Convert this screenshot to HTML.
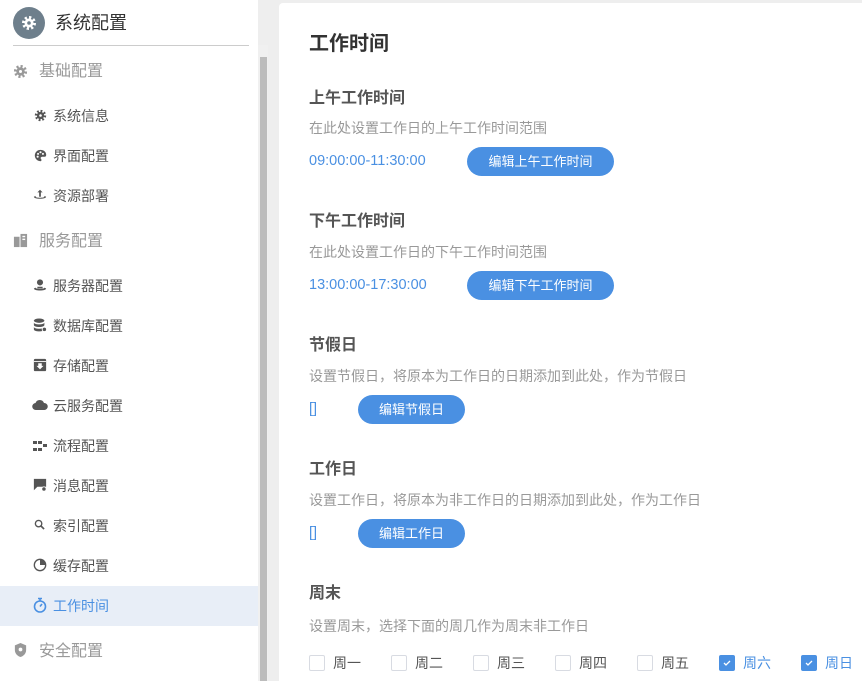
<!DOCTYPE html>
<html><head><meta charset="utf-8"><style>
*{margin:0;padding:0;box-sizing:border-box}
html,body{width:862px;height:681px;overflow:hidden}
body{background:#eeeeee;font-family:"Liberation Sans","Noto Sans CJK SC",sans-serif;position:relative}
.a{position:absolute;white-space:nowrap}
#side{position:absolute;left:0;top:0;width:258px;height:681px;background:#fff}
.grp{font-size:16px;color:#999;line-height:20px}
.sub{font-size:14px;color:#555;line-height:18px}
.ic{position:absolute}
.h{font-size:16px;font-weight:bold;color:#555;line-height:22px}
.d{font-size:14px;color:#999;line-height:18px}
.v{font-size:14.5px;color:#4a90e2;line-height:20px}
.btn{position:absolute;height:29px;border-radius:15px;background:#4a90e2;color:#fff;font-size:13px;line-height:29px;text-align:center}
.cb{position:absolute;top:655px;width:16px;height:16px;border:1px solid #d8dbe2;border-radius:2px;background:#fff}
.cb.on{background:#4a90e2;border-color:#4a90e2}
.cl{position:absolute;top:654px;font-size:14px;color:#555;line-height:18px}
</style></head><body>
<div id="side">
 <div class="a" style="left:13px;top:7px;width:32px;height:32px;border-radius:50%;background:#6e7f8c"></div>
 <svg class="ic" style="left:21px;top:15px" width="16" height="16" viewBox="0 0 16 16"><circle cx="8" cy="8" r="5.5" fill="none" stroke="#fff" stroke-width="3" stroke-dasharray="2.2 2.1"/><circle cx="8" cy="8" r="4.5" fill="#fff"/><circle cx="8" cy="8" r="1.8" fill="#6e7f8c"/></svg>
 <div class="a" style="left:55px;top:11px;font-size:18px;color:#333;line-height:24px">系统配置</div>
 <div class="a" style="left:13px;top:45px;width:236px;height:1px;background:#ccc"></div>

 <svg class="ic" style="left:13px;top:64px" width="15" height="15" viewBox="0 0 16 16"><circle cx="8" cy="8" r="5.5" fill="none" stroke="#999" stroke-width="3" stroke-dasharray="2.2 2.1"/><circle cx="8" cy="8" r="4.5" fill="#999"/><circle cx="8" cy="8" r="1.6" fill="#fff"/></svg>
 <div class="a grp" style="left:39px;top:62px">基础配置</div>

 <svg class="ic" style="left:34px;top:109px" width="13" height="13" viewBox="0 0 16 16"><circle cx="8" cy="8" r="5.5" fill="none" stroke="#555" stroke-width="3" stroke-dasharray="2.2 2.1"/><circle cx="8" cy="8" r="4.5" fill="#555"/><circle cx="8" cy="8" r="1.6" fill="#fff"/></svg>
 <div class="a sub" style="left:53px;top:107px">系统信息</div>
 <svg class="ic" style="left:34px;top:149px" width="13" height="13" viewBox="0 0 16 16"><path d="M8 1a7 7 0 1 0 0 14c1.5 0 1.5-2 .5-3s0-2.5 2-2.5H13c1.5 0 2-1 2-2.5C15 3.5 12 1 8 1z" fill="#555"/><circle cx="5" cy="6" r="1.3" fill="#fff"/><circle cx="8" cy="4" r="1.3" fill="#fff"/><circle cx="11" cy="6" r="1.3" fill="#fff"/><circle cx="4.5" cy="9.5" r="1.3" fill="#fff"/></svg>
 <div class="a sub" style="left:53px;top:147px">界面配置</div>
 <svg class="ic" style="left:33px;top:188px" width="14" height="14" viewBox="0 0 16 16"><path d="M8 2l-3 3h2v5h2V5h2z" fill="#555"/><path d="M1 10c0 3 14 3 14 0l-2-1v1c0 1.5-10 1.5-10 0V9z" fill="#555"/></svg>
 <div class="a sub" style="left:53px;top:187px">资源部署</div>

 <svg class="ic" style="left:13px;top:233px" width="15" height="15" viewBox="0 0 16 16"><rect x="1" y="4" width="6" height="11" fill="#999"/><rect x="8" y="1" width="7" height="14" fill="#999"/><rect x="10" y="3" width="3" height="1.5" fill="#fff"/><rect x="10" y="6" width="3" height="1.5" fill="#fff"/></svg>
 <div class="a grp" style="left:39px;top:232px">服务配置</div>

 <svg class="ic" style="left:33px;top:278px" width="14" height="14" viewBox="0 0 16 16"><circle cx="8" cy="5" r="3.5" fill="#555"/><path d="M1 12c0 3 14 3 14 0l-2-1c0 2-10 2-10 0z" fill="#555"/><path d="M5 10h6v2H5z" fill="#555"/></svg>
 <div class="a sub" style="left:53px;top:277px">服务器配置</div>
 <svg class="ic" style="left:33px;top:318px" width="14" height="14" viewBox="0 0 16 16"><ellipse cx="7" cy="3" rx="6" ry="2.5" fill="#555"/><path d="M1 5c0 3 12 3 12 0v3c0 3-12 3-12 0zM1 10c0 3 12 3 12 0v3c0 3-12 3-12 0z" fill="#555"/><circle cx="13" cy="13" r="2.5" fill="#555" stroke="#fff"/></svg>
 <div class="a sub" style="left:53px;top:317px">数据库配置</div>
 <svg class="ic" style="left:33px;top:358px" width="14" height="14" viewBox="0 0 16 16"><rect x="1" y="1" width="14" height="14" rx="1.5" fill="#555"/><rect x="1" y="3.5" width="14" height="1" fill="#fff"/><path d="M6 6h4v3h2l-4 4-4-4h2z" fill="#fff"/></svg>
 <div class="a sub" style="left:53px;top:357px">存储配置</div>
 <svg class="ic" style="left:32px;top:399px" width="16" height="12" viewBox="0 0 16 12"><path d="M4 11a3.5 3.5 0 0 1-.5-7A4.5 4.5 0 0 1 12 4a3.5 3.5 0 0 1 .5 7z" fill="#555"/></svg>
 <div class="a sub" style="left:53px;top:397px">云服务配置</div>
 <svg class="ic" style="left:33px;top:440px" width="14" height="12" viewBox="0 0 14 12"><rect x="0" y="1" width="4" height="3" fill="#555"/><rect x="5" y="1" width="4" height="3" fill="#555"/><rect x="10" y="4" width="4" height="3" fill="#555"/><rect x="0" y="8" width="4" height="3" fill="#555"/><rect x="5" y="8" width="4" height="3" fill="#555"/></svg>
 <div class="a sub" style="left:53px;top:437px">流程配置</div>
 <svg class="ic" style="left:33px;top:478px" width="14" height="14" viewBox="0 0 16 16"><path d="M1 1h14v9H5l-4 4z" fill="#555"/><circle cx="12.5" cy="12.5" r="2.5" fill="#555" stroke="#fff"/></svg>
 <div class="a sub" style="left:53px;top:477px">消息配置</div>
 <svg class="ic" style="left:34px;top:519px" width="11" height="11" viewBox="0 0 12 12"><circle cx="5" cy="5" r="3.5" fill="none" stroke="#555" stroke-width="1.5"/><path d="M7.5 7.5L11 11" stroke="#555" stroke-width="1.8"/></svg>
 <div class="a sub" style="left:53px;top:517px">索引配置</div>
 <svg class="ic" style="left:33px;top:558px" width="14" height="14" viewBox="0 0 16 16"><circle cx="8" cy="8" r="6.5" fill="none" stroke="#555" stroke-width="1.5"/><path d="M8 1.5A6.5 6.5 0 0 1 14.5 8H8z" fill="#555"/></svg>
 <div class="a sub" style="left:53px;top:557px">缓存配置</div>
 <div class="a" style="left:0;top:586px;width:258px;height:40px;background:#e8eef7"></div>
 <svg class="ic" style="left:33px;top:597px" width="14" height="16" viewBox="0 0 14 16"><circle cx="7" cy="9.5" r="5.5" fill="none" stroke="#4a90e2" stroke-width="1.6"/><path d="M5 1.5h4M7 1.5v2.5M7 9.5l2-2.5" stroke="#4a90e2" stroke-width="1.6" fill="none"/></svg>
 <div class="a sub" style="left:53px;top:597px;color:#4a90e2">工作时间</div>

 <svg class="ic" style="left:13px;top:642px" width="15" height="16" viewBox="0 0 16 17"><path d="M8 1l6 2.5v5c0 4-3 6.5-6 7.5-3-1-6-3.5-6-7.5v-5z" fill="#999"/><circle cx="8" cy="8" r="2" fill="#fff"/></svg>
 <div class="a grp" style="left:39px;top:642px">安全配置</div>
</div>
<div class="a" style="left:258px;top:45px;width:10px;height:636px;background:#f0f0f0"></div>
<div class="a" style="left:260px;top:57px;width:7px;height:624px;background:#bcbcbc"></div>
<div class="a" style="left:279px;top:3px;width:583px;height:678px;background:#fff;border-radius:4px 0 0 0"></div>

<div class="a" style="left:309px;top:31px;font-size:20px;font-weight:bold;color:#333;line-height:26px">工作时间</div>

<div class="a h" style="left:309px;top:88px">上午工作时间</div>
<div class="a d" style="left:309px;top:119px">在此处设置工作日的上午工作时间范围</div>
<div class="a v" style="left:309px;top:151px">09:00:00-11:30:00</div>
<div class="btn" style="left:467px;top:147px;width:147px">编辑上午工作时间</div>

<div class="a h" style="left:309px;top:211px">下午工作时间</div>
<div class="a d" style="left:309px;top:243px">在此处设置工作日的下午工作时间范围</div>
<div class="a v" style="left:309px;top:275px">13:00:00-17:30:00</div>
<div class="btn" style="left:467px;top:271px;width:147px">编辑下午工作时间</div>

<div class="a h" style="left:309px;top:335px">节假日</div>
<div class="a d" style="left:309px;top:367px">设置节假日，将原本为工作日的日期添加到此处，作为节假日</div>
<div class="a v" style="left:309px;top:399px">[]</div>
<div class="btn" style="left:358px;top:395px;width:107px">编辑节假日</div>

<div class="a h" style="left:309px;top:459px">工作日</div>
<div class="a d" style="left:309px;top:491px">设置工作日，将原本为非工作日的日期添加到此处，作为工作日</div>
<div class="a v" style="left:309px;top:523px">[]</div>
<div class="btn" style="left:358px;top:519px;width:107px">编辑工作日</div>

<div class="a h" style="left:309px;top:583px">周末</div>
<div class="a d" style="left:309px;top:617px">设置周末，选择下面的周几作为周末非工作日</div>

<div class="cb" style="left:309px"></div><div class="cl" style="left:333px">周一</div>
<div class="cb" style="left:391px"></div><div class="cl" style="left:415px">周二</div>
<div class="cb" style="left:473px"></div><div class="cl" style="left:497px">周三</div>
<div class="cb" style="left:555px"></div><div class="cl" style="left:579px">周四</div>
<div class="cb" style="left:637px"></div><div class="cl" style="left:661px">周五</div>
<div class="cb on" style="left:719px"><svg width="14" height="14" viewBox="0 0 14 14"><path d="M4 7l2 2 4-4" stroke="#fff" stroke-width="1.3" fill="none"/></svg></div><div class="cl" style="left:743px;color:#4a90e2">周六</div>
<div class="cb on" style="left:801px"><svg width="14" height="14" viewBox="0 0 14 14"><path d="M4 7l2 2 4-4" stroke="#fff" stroke-width="1.3" fill="none"/></svg></div><div class="cl" style="left:825px;color:#4a90e2">周日</div>
</body></html>
